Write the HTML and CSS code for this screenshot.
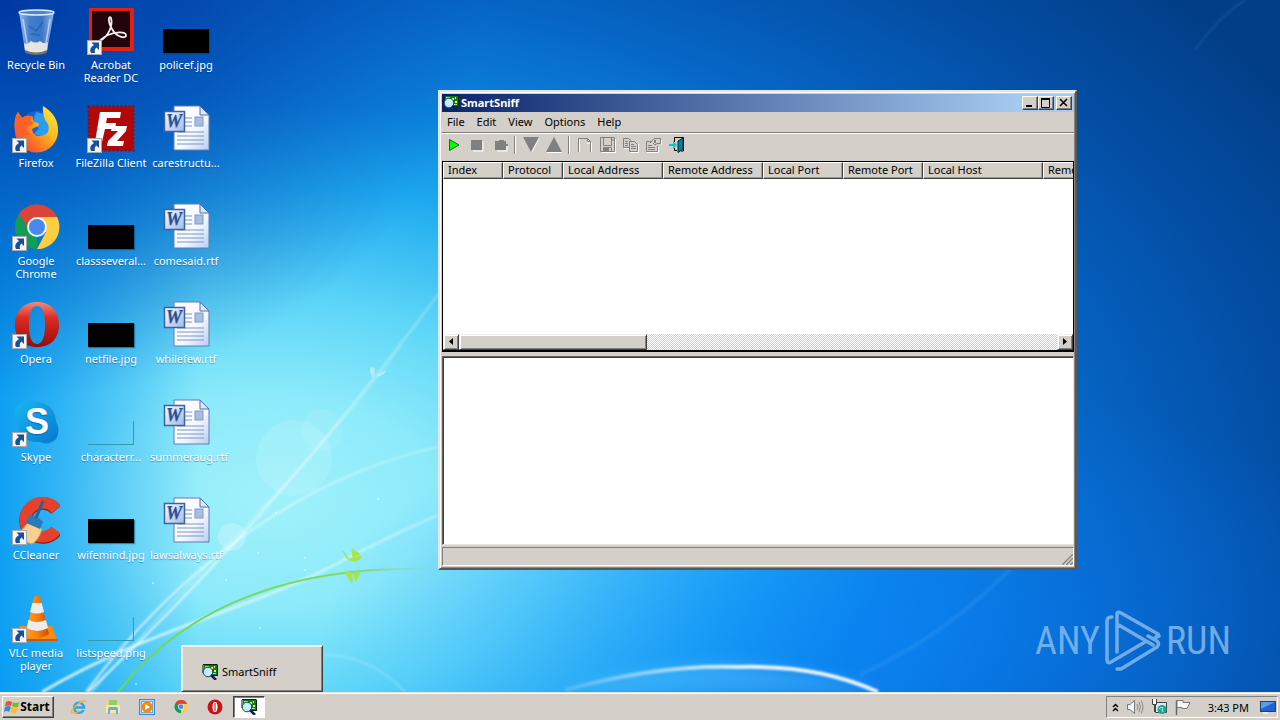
FILE: index.html
```html
<!DOCTYPE html>
<html lang="en">
<head>
<meta charset="utf-8">
<title>Desktop</title>
<link rel="stylesheet" href="styles.css">
</head>
<body>
<svg class="defs" aria-hidden="true">
  <defs>
    <linearGradient id="gPage" x1="0" y1="0" x2="1" y2="1"><stop offset="0" stop-color="#fff"/><stop offset=".6" stop-color="#f4f8ff"/><stop offset="1" stop-color="#b9cdf0"/></linearGradient>
    <linearGradient id="gWord" x1="0" y1="0" x2="1" y2="1"><stop offset="0" stop-color="#fff"/><stop offset="1" stop-color="#9fb9e6"/></linearGradient>
    <linearGradient id="gFox" x1="1" y1="0" x2="0" y2="1"><stop offset="0" stop-color="#fff04a"/><stop offset=".4" stop-color="#ffb81e"/><stop offset=".7" stop-color="#ff6a22"/><stop offset="1" stop-color="#f0245c"/></linearGradient>
    <linearGradient id="gOpera" x1="0" y1="0" x2="0" y2="1"><stop offset="0" stop-color="#f28a80"/><stop offset=".35" stop-color="#dc2c22"/><stop offset="1" stop-color="#9c0a0a"/></linearGradient>
    <linearGradient id="gSkype" x1="0" y1="0" x2="1" y2="1"><stop offset="0" stop-color="#19b8f2"/><stop offset="1" stop-color="#0478d0"/></linearGradient>
    <linearGradient id="gBin" x1="0" y1="0" x2="1" y2="0"><stop offset="0" stop-color="#a9c9ee"/><stop offset=".3" stop-color="#4b86cf"/><stop offset=".65" stop-color="#3f7ccb"/><stop offset="1" stop-color="#a5c4e8"/></linearGradient>
    <linearGradient id="gCone" x1="0" y1="0" x2="1" y2="0"><stop offset="0" stop-color="#ffa12c"/><stop offset=".5" stop-color="#fb7d0c"/><stop offset="1" stop-color="#c85003"/></linearGradient>

    <symbol id="shortcut" viewBox="0 0 15 15">
      <rect x=".5" y=".5" width="14" height="14" fill="#f2f4f7" stroke="#a9a9a9"/>
      <path d="M4.500 2.500H12V10L9.500 7.500Q7 9 8 13H4Q1.500 8 7 5Z" fill="#174f98"/>
    </symbol>

    <symbol id="bin" viewBox="0 0 48 48">
      <path d="M7 5L13 44Q24 49 35 44L42 5Z" fill="url(#gBin)" opacity=".9"/>
      <path d="M12 36L13 44Q24 49 35 44L36 35Q33 38 28 34Q24 37 19 34Q15 38 12 36Z" fill="#e4e4e0"/>
      <path d="M13 43Q24 48 35 43L34.500 46Q24 50 13.500 46Z" fill="#77736c"/>
      <ellipse cx="24.500" cy="5.500" rx="17.500" ry="2.500" fill="#5186cb" stroke="#dce9f8" stroke-width="1.500"/>
      <path d="M11 12L15 36M38 12L34 36" stroke="#d8e7fa" stroke-width="1.500" opacity=".7"/>
      <path d="M17 19L24 24L31 15M19 27L28 28" stroke="#1c56a9" stroke-width="2" fill="none" opacity=".5"/>
    </symbol>

    <symbol id="acrobat" viewBox="0 0 48 48">
      <rect x="2" y="1" width="45" height="43" fill="#e61f10"/>
      <rect x="5" y="4" width="38" height="36" fill="#22050a"/>
      <path d="M13 34C22 29 26 18 24 11C22 8 20 13 25 22C30 31 40 32 39 28C38 24 28 25 21 28C14 31 11 36 13 34Z" fill="none" stroke="#f2efee" stroke-width="1.800"/>
    </symbol>

    <symbol id="firefox" viewBox="0 0 48 48">
      <circle cx="25" cy="23" r="17" fill="#1a62cf"/>
      <path d="M24 7Q33 8 36 15L38 24L31 32L22 29L27 23L20 19Z" fill="#2a9df0"/>
      <path d="M31 1Q46 10 46 25A21.500 21.500 0 0 1 3 27Q1 14 6 7L10 13Q15 9 21 12Q20 16 22 17Q29 18 26 21L20 24Q21 32 29 31Q39 29 36 19Q30 12 31 1Z" fill="url(#gFox)"/>
      <path d="M3 24Q2 13 6 7L10 13Q15 9 21 12Q17 16 22 18L16 22Q13 25 19 30Q10 31 3 24Z" fill="#ff5a29" opacity=".85"/>
    </symbol>

    <symbol id="filezilla" viewBox="0 0 48 48">
      <rect x="1.500" y="1.500" width="45" height="44" fill="#b30808" stroke="#8c0a12" stroke-dasharray="2 2" stroke-width="2"/>
      <path d="M13 7H34L33 13H20L19 18H29L28 24H18L15 37H8Z" fill="#fff"/>
      <path d="M25 21H40L39 26L30 36H37L36 41H20L21 36L31 26H24Z" fill="#fff"/>
    </symbol>

    <symbol id="chrome" viewBox="0 0 48 48">
      <path d="M25 24V46A22 22 0 0 1 5.950 13Z" fill="#0f9d58"/>
      <path d="M25 14H45A22 22 0 0 1 25 46L34 29Z" fill="#ffcd40"/>
      <path d="M16 29L5.950 13A22 22 0 0 1 45 14H25Z" fill="#db4437"/>
      <path d="M5.950 13L16 29L25 24V14Z" fill="#0f9d58"/>
      <path d="M25 14H45A22 22 0 0 0 7 11L16 24Z" fill="#db4437"/>
      <circle cx="25" cy="24" r="10" fill="#f4f4f4"/><circle cx="25" cy="24" r="8" fill="#4a88ee"/>
    </symbol>

    <symbol id="opera" viewBox="0 0 48 48">
      <path fill-rule="evenodd" d="M25 1C39 1 47 11 47 24S39 46 25 46S3 37 3 24S11 1 25 1ZM25 5C19 5 17 14 17 24S19 43 25 43S33 34 33 24S31 5 25 5Z" fill="url(#gOpera)"/>
    </symbol>

    <symbol id="skype" viewBox="0 0 48 48">
      <path d="M15 1Q20 1 24 3Q42 4 44 22Q49 32 44 40Q37 47 28 43Q8 44 5 25Q0 16 5 8Q9 2 15 1Z" fill="url(#gSkype)"/>
      <text x="25" y="35" text-anchor="middle" class="skype-letter">S</text>
    </symbol>

    <symbol id="ccleaner" viewBox="0 0 48 48">
      <path d="M44 13A17 17 0 1 0 44 34" fill="none" stroke="#8e1a10" stroke-width="12.500"/>
      <path d="M44 12.500A17 17 0 1 0 44 33" fill="none" stroke="#e5412e" stroke-width="11.500"/>
      <path d="M17 22L30 32Q27 43 20 47Q10 45 3 37Q14 32 17 22Z" fill="#f7cf91" stroke="#d99b52"/>
      <path d="M17 18Q25 18 31 25L28 32L14 26Z" fill="#2c79b8"/>
      <path d="M24 21L31 4" stroke="#1c679f" stroke-width="3"/>
    </symbol>

    <symbol id="vlc" viewBox="0 0 48 48">
      <path d="M7 31H40L45 45H12Z" fill="#f98a14"/><path d="M12 44L11 46H45V44Z" fill="#c35a05"/>
      <path d="M22 2Q25 -1 28 2L37 39Q26 47 14 39Z" fill="url(#gCone)"/>
      <path d="M20.300 8H29.700L32 17Q25 20 18 17Z" fill="#ececec"/>
      <path d="M16.300 25Q25 29 34 25L36 33Q25 39 14.800 33Z" fill="#ececec"/>
    </symbol>

    <symbol id="word" viewBox="0 0 48 48">
      <path d="M12 1H38L47 10V45H12Z" fill="url(#gPage)" stroke="#5f7fb8"/>
      <path d="M38 1V10H47Z" fill="#dbe8fb" stroke="#4d6eab"/>
      <path d="M23 13H30M23 17H30M23 21H30M15 27H42M15 31H42M15 35H42M15 39H42" stroke="#7f95c0"/>
      <rect x="33" y="12" width="8" height="9" fill="#a8bee0" stroke="#7e99c9"/>
      <rect x="2.500" y="6.500" width="20" height="20" fill="url(#gWord)" stroke="#3e62a8" stroke-width="1.500"/>
      <text x="12" y="22" text-anchor="middle" class="word-letter">W</text>
    </symbol>

    <symbol id="sniff" viewBox="0 0 16 16">
      <rect x="2" y="1" width="13" height="10" fill="#0a7a20"/>
      <path d="M1 .5H15.500M15.500 1V11M1 9V1M10 11.500H16" stroke="#042808" fill="none"/>
      <path d="M9 3H11V5H9ZM12 2H13V4H12ZM12 6H14V8H12Z" fill="#ffe84d"/>
      <path d="M3 2H7V4H3ZM11 9H14V10H11Z" fill="#93f08b"/>
      <circle cx="6" cy="8" r="4.800" fill="#b5eeff" stroke="#21474e"/>
      <path d="M4 8L7 5M5 10L9 6" stroke="#fff"/>
      <path d="M9 11L14 16" stroke="#101c60" stroke-width="2.500"/><path d="M13 11L10 14" stroke="#222"/>
    </symbol>
  </defs>
</svg>

<main class="desktop">
  <svg class="rays" viewBox="0 0 1280 692" preserveAspectRatio="none" aria-hidden="true">
    <defs>
      <linearGradient id="rFade" x1="0" y1="1" x2="1" y2="0"><stop offset="0" stop-color="#fff" stop-opacity=".8"/><stop offset="1" stop-color="#fff" stop-opacity=".3"/></linearGradient>
      <linearGradient id="gGreen" x1="0" y1="0" x2="1" y2="0"><stop offset="0" stop-color="#6fd84d"/><stop offset=".75" stop-color="#7fdb62"/><stop offset="1" stop-color="#7fdb62" stop-opacity="0"/></linearGradient>
      <linearGradient id="gArc" x1="0" y1="0" x2="1" y2="0"><stop offset="0" stop-color="#fff" stop-opacity=".15"/><stop offset=".6" stop-color="#fff" stop-opacity=".9"/><stop offset="1" stop-color="#fff" stop-opacity=".9"/></linearGradient>
      <filter id="soft" x="-10%" y="-10%" width="120%" height="120%"><feGaussianBlur stdDeviation="1"/></filter>
      <filter id="haze" x="-20%" y="-60%" width="140%" height="220%"><feGaussianBlur stdDeviation="8"/></filter>
    </defs>
    <circle cx="294" cy="458" r="38" fill="#fff" opacity=".12"/>
    <circle cx="323" cy="430" r="21" fill="#fff" opacity=".09"/>
    <circle cx="232" cy="537" r="14" fill="#fff" opacity=".22"/>
    <path d="M570 692Q680 655 760 667Q830 675 880 692Z" fill="#7fd4ff" opacity=".3" filter="url(#haze)"/>
    <g fill="none" filter="url(#soft)">
      <path d="M88 692C185 600 300 480 440 292" stroke="url(#rFade)" stroke-width="2"/>
      <path d="M92 692C190 575 320 460 402 345" stroke="url(#rFade)" stroke-width="1"/>
      <path d="M86 692C170 580 290 480 438 447" stroke="url(#rFade)" stroke-width="2"/>
      <path d="M42 692C150 628 250 610 340 562Q390 536 438 515" stroke="url(#rFade)" stroke-width="3"/>
      <path d="M565 690Q660 664 740 667Q820 665 878 692" stroke="url(#gArc)" stroke-width="4"/>
      <path d="M860 675Q980 620 1070 500" stroke="#8bd0ff" stroke-opacity=".12" stroke-width="4"/>
      <path d="M1195 50Q1220 15 1245 0" stroke="#9cd6ee" stroke-opacity=".25"/>
      <path d="M325 655Q370 655 405 692" stroke="#fff" stroke-opacity=".2" stroke-width="2"/>
    </g>
    <path d="M118 692C190 600 300 566 430 569" fill="none" stroke="url(#gGreen)" stroke-width="2"/>
    <path d="M343 551Q347 562 355 561Q362 559 361 556L349 559ZM352 549L353 557L360 554ZM345 572L352 583L352 573ZM353 573L356 581L360 573Z" fill="#a9e548" stroke="#a9e548"/>
    <path d="M370 369Q372 365 375 369L374 379Q370 376 370 369ZM377 374L387 370Q385 375 377 377Z" fill="#bdefff" opacity=".8"/>
    <g fill="#fff" opacity=".6"><circle cx="276" cy="513" r="1"/><circle cx="258" cy="553" r="1"/><circle cx="305" cy="558" r="1"/><circle cx="226" cy="580" r="1"/><circle cx="378" cy="499" r="1"/><circle cx="305" cy="570" r="1"/><circle cx="136" cy="684" r="1"/><circle cx="153" cy="583" r="1"/><circle cx="260" cy="628" r="1"/></g>
  </svg>

  <ul class="icons">
    <li class="item"><span class="pic"><svg class="art"><use href="#bin"/></svg></span><span class="name">Recycle Bin</span></li>
    <li class="item"><span class="pic"><svg class="art"><use href="#firefox"/></svg><svg class="badge"><use href="#shortcut"/></svg></span><span class="name">Firefox</span></li>
    <li class="item"><span class="pic"><svg class="art"><use href="#chrome"/></svg><svg class="badge"><use href="#shortcut"/></svg></span><span class="name">Google Chrome</span></li>
    <li class="item"><span class="pic"><svg class="art"><use href="#opera"/></svg><svg class="badge"><use href="#shortcut"/></svg></span><span class="name">Opera</span></li>
    <li class="item"><span class="pic"><svg class="art"><use href="#skype"/></svg><svg class="badge"><use href="#shortcut"/></svg></span><span class="name">Skype</span></li>
    <li class="item"><span class="pic"><svg class="art"><use href="#ccleaner"/></svg><svg class="badge"><use href="#shortcut"/></svg></span><span class="name">CCleaner</span></li>
    <li class="item"><span class="pic"><svg class="art"><use href="#vlc"/></svg><svg class="badge"><use href="#shortcut"/></svg></span><span class="name">VLC media player</span></li>

    <li class="item"><span class="pic"><svg class="art"><use href="#acrobat"/></svg><svg class="badge"><use href="#shortcut"/></svg></span><span class="name">Acrobat Reader DC</span></li>
    <li class="item"><span class="pic"><svg class="art"><use href="#filezilla"/></svg><svg class="badge"><use href="#shortcut"/></svg></span><span class="name">FileZilla Client</span></li>
    <li class="item"><span class="pic"><span class="thumb"></span></span><span class="name">classseveral...</span></li>
    <li class="item"><span class="pic"><span class="thumb"></span></span><span class="name">netfile.jpg</span></li>
    <li class="item"><span class="pic"><span class="thumb clear"></span></span><span class="name">characterr...</span></li>
    <li class="item"><span class="pic"><span class="thumb"></span></span><span class="name">wifemind.jpg</span></li>
    <li class="item"><span class="pic"><span class="thumb clear"></span></span><span class="name">listspeed.png</span></li>

    <li class="item"><span class="pic"><span class="thumb"></span></span><span class="name">policef.jpg</span></li>
    <li class="item"><span class="pic"><svg class="art"><use href="#word"/></svg></span><span class="name">carestructu...</span></li>
    <li class="item"><span class="pic"><svg class="art"><use href="#word"/></svg></span><span class="name">comesaid.rtf</span></li>
    <li class="item"><span class="pic"><svg class="art"><use href="#word"/></svg></span><span class="name">whilefew.rtf</span></li>
    <li class="item"><span class="pic"><svg class="art"><use href="#word"/></svg></span><span class="name">summeraug.rtf</span></li>
    <li class="item"><span class="pic"><svg class="art"><use href="#word"/></svg></span><span class="name">lawsalways.rtf</span></li>
  </ul>

  <section class="window" aria-label="SmartSniff">
    <header class="titlebar">
      <svg class="app-icon"><use href="#sniff"/></svg>
      <h1 class="title">SmartSniff</h1>
      <button class="cap" aria-label="Minimize"><svg width="12" height="10"><path d="M2 8H8" stroke="#000" stroke-width="2"/></svg></button>
      <button class="cap" aria-label="Maximize"><svg width="12" height="10"><path d="M1.500 1V9.500H9.500V1" stroke="#000" fill="none"/><path d="M1 1H10" stroke="#000" stroke-width="2"/></svg></button>
      <button class="cap close" aria-label="Close"><svg width="12" height="10"><path d="M2 1L9 8M9 1L2 8" stroke="#000" stroke-width="1.600"/></svg></button>
    </header>
    <nav class="menu">
      <button>File</button><button>Edit</button><button>View</button><button>Options</button><button>Help</button>
    </nav>
    <div class="toolbar">
      <button aria-label="Start capture"><svg viewBox="0 0 16 16"><path d="M3.500 2.500V13.500L13 8Z" fill="#0f0" stroke="#087008"/></svg></button>
      <button aria-label="Stop capture"><svg viewBox="0 0 16 16"><path d="M4 14H14V4" stroke="#fff" fill="none"/><rect x="2" y="3" width="11" height="10" fill="#808080"/></svg></button>
      <button aria-label="Open capture"><svg viewBox="0 0 16 16"><path d="M5 14H15V8" stroke="#fff" fill="none"/><path d="M3 4H7V3H12V4H14V7H16V9H14V13H3Z" fill="#808080"/></svg></button>
      <i class="sep"></i>
      <button aria-label="Next item"><svg viewBox="0 0 16 16"><path d="M9 15L16 1" stroke="#fff"/><path d="M0 0H16L8 15Z" fill="#808080"/></svg></button>
      <button aria-label="Previous item"><svg viewBox="0 0 16 16"><path d="M1 15.500H16" stroke="#fff"/><path d="M0 15H16L8 0Z" fill="#808080"/></svg></button>
      <i class="sep"></i>
      <button aria-label="New"><svg viewBox="0 0 16 16"><path d="M2.500 15V2M11 2.500L14 5.500M14.500 15V6H10" stroke="#fff" fill="none"/><path d="M1.500 15V1.500H10.500L13.500 4.500V15M10.500 1.500V4.500H13.500" stroke="#808080" fill="none"/></svg></button>
      <button aria-label="Save"><svg viewBox="0 0 16 16"><path d="M2 15.500H15.500V2" stroke="#fff" fill="none"/><path d="M.500 .500H14.500V14.500H.500ZM3.500 1V8.500H11.500V1M3.500 14V10.500H11.500V14M12 3H14" stroke="#808080" fill="none"/><path d="M4 11H9V14H4Z" fill="#808080"/></svg></button>
      <button aria-label="Copy"><svg viewBox="0 0 16 16"><path d="M7 15.500H15.500V7M1 11.500H6" stroke="#fff" fill="none"/><path d="M6 10.500H.500V1.500H5.500L8.500 4M2 4.500H5M2 6.500H5M2 8.500H5M6.500 4.500H11.500L14.500 7.500V14.500H6.500ZM8 7.500H11M8 9.500H13M8 11.500H13" stroke="#808080" fill="none"/></svg></button>
      <button aria-label="Properties"><svg viewBox="0 0 16 16"><path d="M1 15.500H12.500V10M15.500 3V8" stroke="#fff" fill="none"/><path d="M5 4.500H.500V14.500H11.500V9M2 8.500H6M2 10.500H9M2 12.500H9M4 6L8 1.500H14.500V6.500H11L9 8L7 6" stroke="#808080" fill="none"/><path d="M8 3H10V6H8Z" fill="#808080"/></svg></button>
      <button aria-label="Exit"><svg viewBox="0 0 16 16"><path d="M5.500 5V.5H14.500V14H12M5.500 11V13.500H8" stroke="#000" fill="none"/><path d="M9 4L14 1V12L9 15.500Z" fill="#088" stroke="#024"/><path d="M0 7H4V4L8 8L4 12V9H0Z" fill="#0cc"/></svg></button>
    </div>
    <div class="list">
      <div class="list-view">
        <table class="grid">
          <colgroup><col class="c60"><col class="c60"><col class="c100"><col class="c100"><col class="c80"><col class="c80"><col class="c120"><col class="c120"></colgroup>
          <thead><tr><th>Index</th><th>Protocol</th><th>Local Address</th><th>Remote Address</th><th>Local Port</th><th>Remote Port</th><th>Local Host</th><th>Remote Host</th></tr></thead>
        </table>
      </div>
      <div class="scroll">
        <button class="arrow" aria-label="Scroll left"><svg width="4" height="7"><path d="M4 0V7L0 3.500Z"/></svg></button>
        <div class="track"><div class="knob"></div></div>
        <button class="arrow" aria-label="Scroll right"><svg width="4" height="7"><path d="M0 0V7L4 3.500Z"/></svg></button>
      </div>
    </div>
    <div class="pane"></div>
    <footer class="status"><svg width="12" height="12"><path d="M0 12L12 0M4 12L12 4M8 12L12 8" stroke="#fff"/><path d="M1 12L12 1M5 12L12 5M9 12L12 9" stroke="#808080" stroke-width="1.500"/></svg></footer>
  </section>

  <div class="watermark">
    <span>ANY</span>
    <svg width="56" height="62" viewBox="0 0 56 62" fill="none" stroke="currentColor" stroke-width="3.500" stroke-linejoin="round" stroke-linecap="round"><path d="M7 7Q2 7 2 11V50Q2 54 6 52L40 32M12 42V4Q12 1 16 3L53 24M12 14L48 35M12 42V14M53 24L54 26L51 27M12 59L16 59L52 37Q55 34 52 31L43 26"/></svg>
    <span>RUN</span>
  </div>
  <div class="preview"><svg class="app-icon"><use href="#sniff"/></svg><span>SmartSniff</span></div>
</main>

<footer class="taskbar">
  <button class="start"><svg width="16" height="16" viewBox="0 0 16 16"><path d="M2 3Q5 1 8 3L7 7Q4 6 1 7Z" fill="#e6532a"/><path d="M9 3Q12 5 15 3L14 8Q11 9 8 7Z" fill="#7bb82c"/><path d="M1 8Q4 6 7 8L5 13Q3 11 0 13Z" fill="#3b86d8"/><path d="M8 8Q11 10 14 9L12 14Q9 15 6 13Z" fill="#f5c02c"/></svg>Start</button>
  <nav class="quick">
    <button aria-label="Internet Explorer"><svg viewBox="0 0 16 16"><path d="M12.500 11A5 5 0 1 1 13 8.500H4" fill="none" stroke="#35a3e6" stroke-width="2.500"/><path d="M1 14Q-1 11 7 5Q14 0 15 3M1 14Q4 15 8 12" fill="none" stroke="#e9b93a" stroke-width="1.300"/></svg></button>
    <button aria-label="Explorer"><svg viewBox="0 0 16 16"><path d="M1 2H6L7 4H14V14H1Z" fill="#f0d273"/><path d="M4 1H12V7H4Z" fill="#8fcd6f"/><path d="M1 6H15V14H1Z" fill="#fae9a0"/><path d="M3 15V10Q3 8 5 8H11Q13 8 13 10V15H11V11H5V15Z" fill="#5fb0e0"/></svg></button>
    <button aria-label="Media Player"><svg viewBox="0 0 16 16"><rect x=".5" y=".5" width="15" height="15" fill="#b6dcf7" stroke="#3c88c9"/><rect x="2.500" y="2.500" width="11" height="11" fill="#e4f1fa" stroke="#6da8d6"/><circle cx="8" cy="8" r="5.500" fill="#f58a12"/><path d="M6 5V11L11 8Z" fill="#fff"/></svg></button>
    <button aria-label="Chrome"><svg viewBox="-2 -2 54 54"><use href="#chrome" width="48" height="48"/></svg></button>
    <button aria-label="Opera"><svg viewBox="0 0 16 16"><circle cx="8" cy="8" r="7.500" fill="#c71414"/><ellipse cx="8" cy="8" rx="2.500" ry="5" fill="#fff"/><path d="M8 4V12" stroke="#a11" stroke-width="1"/></svg></button>
    <button class="active" aria-label="SmartSniff"><svg viewBox="0 0 16 16"><use href="#sniff" width="16" height="16"/></svg></button>
  </nav>
  <div class="tray">
    <button aria-label="Show hidden icons"><svg width="7" height="9"><path d="M1 4L3.500 1.500L6 4M1 8L3.500 5.500L6 8" fill="none" stroke="#000" stroke-width="1.500"/></svg></button>
    <svg width="18" height="16" viewBox="0 0 18 16"><path d="M1.500 5.500H4L8.500 1.500V14.500L4 10.500H1.500Z" fill="#f8f8f8" stroke="#777"/><path d="M11 5Q13 8 11 11M13 3Q16 8 13 13M15 1.500Q19 8 15 14.500" stroke="#888" fill="none"/></svg>
    <svg width="16" height="16" viewBox="0 0 16 16"><path d="M4.500 3.500H15.500V13.500H4.500Z" fill="#d9ecf2" stroke="#444"/><path d="M1.500 0V5.500H5.500V0M3.500 6V13" stroke="#444" fill="#fff"/><circle cx="11" cy="10.500" r="4.500" fill="#21a58c"/><path d="M8 10Q10 7 12 9Q10 11 12 13" stroke="#b8f0df" fill="none"/></svg>
    <svg width="17" height="16" viewBox="0 0 17 16"><path d="M2.500 16V1.500" stroke="#666" stroke-width="1.500"/><path d="M3 1.500H9V3.500H16L13 9.500H8V8.500H3Z" fill="#f8f8f8" stroke="#777"/></svg>
    <time class="clock">3:43 PM</time>
    <button class="show" aria-label="Show desktop"><svg width="16" height="13" viewBox="0 0 16 13"><rect x=".5" y=".5" width="15" height="10" fill="#2364cc" stroke="#20406e"/><path d="M1 1H15L1 8Z" fill="#5a9cf0"/><path d="M3 12H8" stroke="#eee" stroke-width="2"/></svg></button>
  </div>
</footer>
</body>
</html>
```
FILE: styles.css
```css
* { box-sizing: border-box; }

body {
  margin: 0;
  height: 100vh;
  display: flex;
  flex-direction: column;
  overflow: hidden;
  font: 11px/13px "Noto Sans", "Open Sans", sans-serif;
  color: #000;
}

button {
  font: inherit;
  color: inherit;
  border: 0;
  padding: 0;
  background: none;
  display: flex;
  align-items: center;
  justify-content: center;
}

.defs { position: absolute; width: 0; height: 0; }

.desktop {
  position: relative;
  flex: 1;
  min-height: 0;
  overflow: hidden;
  background:
    radial-gradient(ellipse 480px 400px at 0 0, rgba(0, 50, 158, .95), rgba(0, 70, 175, 0)),
    linear-gradient(90deg, rgba(0, 150, 242, .85), rgba(0, 160, 242, 0) 200px),
    radial-gradient(ellipse 560px 260px at 880px 640px, rgba(10, 130, 255, .6), rgba(10, 130, 255, 0)),
    radial-gradient(ellipse 1200px 760px at 270px 500px, #a0f2fa 0, #8ceafa 14%, #5ed6f8 26%, #1fabf0 41%, #0c85de 52%, #0665c4 68%, #034fa6 84%, #023f88 100%);
}

.rays { position: absolute; inset: 0; width: 100%; height: 100%; }

.icons {
  position: relative;
  width: max-content;
  margin: 0;
  padding: 7px 0 0;
  list-style: none;
  display: grid;
  grid-auto-flow: column;
  grid-template-rows: repeat(7, 98px);
  grid-auto-columns: 75px;
}
.item {
  display: flex;
  flex-direction: column;
  align-items: center;
  gap: 3px;
  padding-right: 3px;
  color: #fff;
  text-align: center;
  text-shadow: 0 1px 1px rgba(0, 40, 90, .4);
}
.pic {
  position: relative;
  width: 48px;
  height: 48px;
  display: flex;
  align-items: flex-end;
  justify-content: center;
}
.art { width: 48px; height: 48px; }
.badge { position: absolute; left: 0; bottom: 0; width: 15px; height: 15px; }
.name { max-width: 72px; }
.thumb {
  width: 46px;
  height: 24px;
  margin-bottom: 2px;
  background: #000;
  box-shadow: 1px 1px 1px rgba(0, 60, 90, .5);
}
.thumb.clear {
  background: none;
  box-shadow: none;
  border-right: 1px solid #2f9dae;
  border-bottom: 1px solid #2f9dae;
}
.skype-letter { font: bold 36px "Liberation Sans", sans-serif; fill: #fff; }
.word-letter { font: italic bold 18px "Liberation Serif", serif; fill: #2b4f9c; }

.window {
  position: absolute;
  left: 438px;
  top: 90px;
  width: 639px;
  height: 480px;
  padding: 2px 1px 2px 2px;
  display: flex;
  flex-direction: column;
  background: #d4cfc8;
  border: 2px solid;
  border-color: #e8e4de #5a5854 #5a5854 #e8e4de;
  box-shadow: inset 1px 1px #fff, inset -1px -1px #8a8680;
}
.titlebar {
  flex: none;
  height: 18px;
  display: flex;
  align-items: center;
  padding: 0 2px 0 1px;
  background: linear-gradient(90deg, #0a246a, #a6caf0 92%);
}
.app-icon { width: 16px; height: 16px; flex: none; }
.title {
  flex: 1;
  margin: 0 0 0 2px;
  padding-bottom: 2px;
  font: bold 11px/13px "Noto Sans", sans-serif;
  color: #fff;
}
.cap {
  width: 16px;
  height: 14px;
  background: #d4cfc8;
  border: 1px solid;
  border-color: #fff #404040 #404040 #fff;
  box-shadow: inset -1px -1px #808080;
}
.close { margin-left: 2px; }

.menu {
  flex: none;
  height: 21px;
  display: flex;
  align-items: center;
  gap: 12px;
  padding: 0 5px 2px;
  border-bottom: 1px solid #808080;
}
.toolbar {
  flex: none;
  height: 28px;
  display: flex;
  align-items: center;
  border-top: 1px solid #fff;
  padding-bottom: 5px;
}
.toolbar button { width: 23px; height: 22px; }
.toolbar svg { width: 16px; height: 16px; }
.sep {
  width: 2px;
  height: 18px;
  margin: 0 3px;
  border-left: 1px solid #808080;
  border-right: 1px solid #fff;
}

.list {
  flex: 1;
  display: flex;
  flex-direction: column;
  min-height: 0;
  background: #fff;
  border: 1px solid #000;
  border-bottom-width: 2px;
}
.list-view { flex: 1; overflow: hidden; }
.grid { width: 720px; table-layout: fixed; border-collapse: separate; border-spacing: 0; }
.c60 { width: 60px; }
.c80 { width: 80px; }
.c100 { width: 100px; }
.c120 { width: 120px; }
.grid th {
  height: 17px;
  padding: 0 0 1px 4px;
  line-height: 14px;
  font-weight: normal;
  text-align: left;
  white-space: nowrap;
  background: #d4cfc8;
  border: 1px solid;
  border-color: #fff #404040 #404040 #fff;
  box-shadow: inset -1px -1px #a09c96;
}
.scroll { display: flex; height: 16px; flex: none; }
.arrow, .knob {
  width: 16px;
  background: #d4cfc8;
  border: 1px solid;
  border-color: #f4f2ee #404040 #404040 #f4f2ee;
  box-shadow: inset 1px 1px #fff, inset -1px -1px #808080;
}
.track {
  flex: 1;
  background: repeating-conic-gradient(#fff 0 25%, #d4cfc8 0 50%) 0 0 / 2px 2px;
}
.knob { width: 188px; height: 100%; }

.pane {
  flex: 1;
  margin: 4px 0 2px;
  background: #fff;
  border: 1px solid;
  border-color: #606060 #e8e4de #e8e4de #606060;
  box-shadow: inset 1px 1px #404040;
}
.status {
  flex: none;
  height: 19px;
  display: flex;
  justify-content: flex-end;
  align-items: flex-end;
  border: 1px solid;
  border-color: #808080 #fff #fff #808080;
}

.watermark {
  position: absolute;
  right: 49px;
  bottom: 20px;
  display: flex;
  align-items: center;
  gap: 5px;
  color: rgba(150, 195, 240, .75);
  font: 38px/62px "Roboto Condensed", "Liberation Sans Narrow", Roboto, sans-serif;
}

.preview {
  position: absolute;
  left: 181px;
  bottom: 0;
  width: 142px;
  height: 47px;
  padding: 6px 0 0 20px;
  display: flex;
  align-items: center;
  gap: 4px;
  background: #d4cfc8;
  border: 1px solid;
  border-color: #fff #404040 #404040 #fff;
  box-shadow: inset 1px 1px #f0eeea, inset -1px -1px #808080;
}

.taskbar {
  flex: none;
  height: 28px;
  display: flex;
  align-items: center;
  padding: 3px 2px 2px;
  background: #d4cfc8;
  border-top: 1px solid #e4e0da;
  box-shadow: inset 0 1px #fff;
}
.start {
  width: 52px;
  height: 22px;
  padding: 0 2px 0 0;
  font: bold 12px/14px "Noto Sans", sans-serif;
  border: 1px solid;
  border-color: #fff #404040 #404040 #fff;
  box-shadow: inset -1px -1px #808080;
}
.quick { flex: 1; display: flex; gap: 2px; margin-left: 9px; }
.quick button { width: 32px; height: 22px; }
.quick svg { width: 16px; height: 16px; }
.quick .active {
  background: #fff;
  border: 1px solid;
  border-color: #404040 #fff #fff #404040;
  box-shadow: inset 1px 1px #808080;
}
.tray {
  height: 22px;
  display: flex;
  align-items: center;
  gap: 7px;
  padding: 0 1px 0 5px;
  border: 1px solid;
  border-color: #808080 #fff #fff #808080;
}
.clock { margin: 0 4px 0 10px; }
```
